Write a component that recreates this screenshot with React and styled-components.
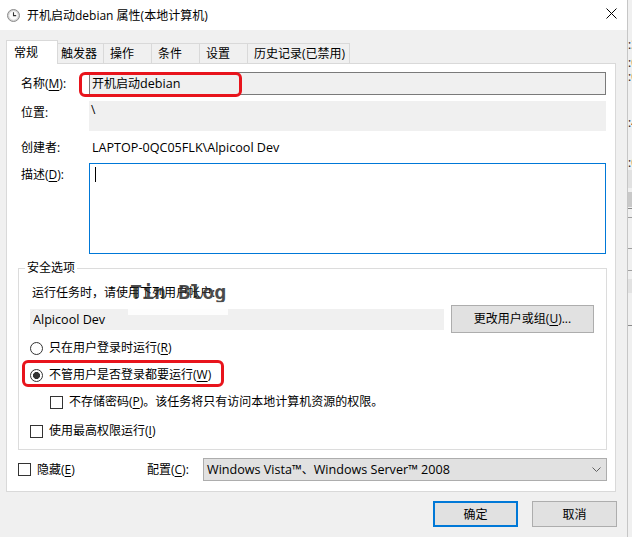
import React from "react";
import styled, { createGlobalStyle } from "styled-components";

const GlobalStyle = createGlobalStyle`
  html, body {
    margin: 0;
    padding: 0;
  }
  body {
    width: 632px;
    height: 537px;
    overflow: hidden;
    background: #f0f0f0;
    font-family: "Open Sans", "Noto Sans CJK SC", sans-serif;
    font-size: 12px;
    color: #000;
  }
  u {
    text-underline-offset: 2px;
  }
`;

const tabs = [
  { label: "常规", w: 52, pad: 7, active: true },
  { label: "触发器", w: 47, pad: 3 },
  { label: "操作", w: 49, pad: 6 },
  { label: "条件", w: 49, pad: 6 },
  { label: "设置", w: 49, pad: 6 },
  { label: "历史记录(已禁用)", w: 103, pad: 6 },
];

const stripBits = [
  { gap: 38, text: ":3" },
  { gap: 4, text: ":0" },
  { gap: 0, text: ":0" },
  { gap: 32, text: ":4" },
  { gap: 26, text: ":0" },
];

export default function App() {
  return (
    <>
      <GlobalStyle />
      <Screen>
        <Dialog>
          <TitleBar>
            <ClockIcon />
            <Title>开机启动debian 属性(本地计算机)</Title>
            <CloseIcon />
          </TitleBar>

          <Body>
            <TabStrip>
              {tabs.map((t) => (
                <Tab key={t.label} $active={t.active} $w={t.w} $pad={t.pad}>
                  {t.label}
                </Tab>
              ))}
            </TabStrip>

            <Panel>
              <FieldRow $mt={8}>
                <Label>
                  名称(<u>M</u>):
                </Label>
                <NameField>
                  开机启动<Latin>debian</Latin>
                </NameField>
              </FieldRow>

              <FieldRow $mt={6}>
                <Label>位置:</Label>
                <LocationField>\</LocationField>
              </FieldRow>

              <FieldRow $mt={9}>
                <Label $flat>创建者:</Label>
                <Value>
                  <Latin>LAPTOP-0QC05FLK\Alpicool Dev</Latin>
                </Value>
              </FieldRow>

              <FieldRow $mt={7}>
                <Label>
                  描述(<u>D</u>):
                </Label>
                <TextArea>
                  <Caret />
                </TextArea>
              </FieldRow>

              <Group>
                <Legend>安全选项</Legend>
                <Intro>运行任务时，请使用下列用户帐户:</Intro>
                <UserRow>
                  <UserField>
                    <Latin>Alpicool Dev</Latin>
                  </UserField>
                  <PushButton>
                    更改用户或组(<u>U</u>)...
                  </PushButton>
                </UserRow>

                <OptionRow $mt={7}>
                  <Radio />
                  <span>
                    只在用户登录时运行(<u>R</u>)
                  </span>
                </OptionRow>
                <OptionRow $mt={11} $marked>
                  <Radio $checked />
                  <span>
                    不管用户是否登录都要运行(<u>W</u>)
                  </span>
                </OptionRow>
                <OptionRow $mt={11} $indent={20}>
                  <Checkbox />
                  <span>
                    不存储密码(<u>P</u>)。该任务将只有访问本地计算机资源的权限。
                  </span>
                </OptionRow>
                <OptionRow $mt={13}>
                  <Checkbox />
                  <span>
                    使用最高权限运行(<u>I</u>)
                  </span>
                </OptionRow>
              </Group>

              <BottomRow>
                <HideOption>
                  <Checkbox />
                  <span>
                    隐藏(<u>E</u>)
                  </span>
                </HideOption>
                <ConfigLabel>
                  配置(<u>C</u>):
                </ConfigLabel>
                <Select>
                  <span>
                    <Latin>Windows Vista™</Latin>、<Latin>Windows Server™ 2008</Latin>
                  </span>
                  <Chevron />
                </Select>
              </BottomRow>
            </Panel>

            <Footer>
              <DialogButton $primary>确定</DialogButton>
              <DialogButton>取消</DialogButton>
            </Footer>
          </Body>

          <Watermark>Tin Blog</Watermark>
          <WatermarkBand />
        </Dialog>

        <BackWindow>
          {stripBits.map((b, i) => (
            <StripText key={i} $gap={b.gap}>
              {b.text}
            </StripText>
          ))}
          <StripBlock $gap={0} $h={18} $c="#e2e2e2" />
          <StripBlock $gap={4} $h={15} $c="#c9c9c9" />
          <StripBlock $gap={1} $h={1} $c="#8a8a8a" />
          <StripBlock $gap={8} $h={1} $c="#a0a0a0" />
          <StripBlock $gap={30} $h={1} $c="#a0a0a0" />
          <StripBlock $gap={21} $h={1} $c="#a0a0a0" />
          <StripBlock $gap={8} $h={14} $c="#e2e2e2" />
          <StripBlock $gap={32} $h={1} $c="#8a8a8a" />
        </BackWindow>
      </Screen>
    </>
  );
}

function ClockIcon() {
  return (
    <svg width="13" height="13" viewBox="0 0 13 13" style={{ flexShrink: 0 }}>
      <circle cx="6.5" cy="6.5" r="6" fill="#d6d6d6" stroke="#8c8c8c" />
      <circle cx="6.5" cy="6.5" r="4.3" fill="#fbfbfb" />
      <path d="M6.5 3.2 V6.6 H9.2" fill="none" stroke="#333" strokeWidth="1.1" />
    </svg>
  );
}

function CloseIcon() {
  return (
    <CloseSvg width="11" height="11" viewBox="0 0 11 11">
      <path d="M0.5 0.5 L10.5 10.5 M10.5 0.5 L0.5 10.5" stroke="#000" strokeWidth="1" />
    </CloseSvg>
  );
}

function Chevron() {
  return (
    <svg width="9" height="5" viewBox="0 0 9 5">
      <path d="M0.5 0.5 L4.5 4.5 L8.5 0.5" fill="none" stroke="#606060" strokeWidth="1" />
    </svg>
  );
}

const Screen = styled.div`
  display: flex;
  width: 632px;
  height: 537px;
`;

const Dialog = styled.div`
  position: relative;
  width: 628px;
  height: 537px;
  flex-shrink: 0;
  box-sizing: border-box;
  border-right: 1px solid #c6c6c6;
  background: #f0f0f0;
`;

const TitleBar = styled.div`
  display: flex;
  align-items: center;
  height: 30px;
  padding-left: 7px;
  background: #fff;
`;

const Title = styled.span`
  margin-left: 7px;
  font-size: 12px;
  color: #000;
  white-space: nowrap;
`;

const CloseSvg = styled.svg`
  margin-left: auto;
  margin-right: 10px;
  margin-top: -3px;
`;

const Latin = styled.span`
  font-size: 12.6px;
`;

const Body = styled.div`
  padding: 10px 10px 0 6px;
`;

const TabStrip = styled.div`
  display: flex;
  align-items: flex-end;
  height: 24px;
  margin-bottom: -1px;
  position: relative;
  z-index: 1;
`;

const Tab = styled.div`
  box-sizing: border-box;
  display: flex;
  align-items: center;
  width: ${(p) => p.$w}px;
  height: ${(p) => (p.$active ? 24 : 21)}px;
  padding-left: ${(p) => p.$pad}px;
  margin-left: ${(p) => (p.$active ? 0 : -1)}px;
  border: 1px solid #d9d9d9;
  border-bottom: ${(p) => (p.$active ? "none" : "1px solid #d9d9d9")};
  background: ${(p) => (p.$active ? "#fff" : "#f0f0f0")};
  position: relative;
  z-index: ${(p) => (p.$active ? 2 : 1)};
  white-space: nowrap;
  line-height: 16px;
`;

const Panel = styled.div`
  box-sizing: border-box;
  width: 610px;
  height: 429px;
  padding: 0 8px 0 11px;
  background: #fff;
  border: 1px solid #d9d9d9;
  display: flex;
  flex-direction: column;
`;

const FieldRow = styled.div`
  display: grid;
  grid-template-columns: 68px 517px;
  align-items: start;
  padding-left: 3px;
  margin-top: ${(p) => p.$mt}px;
  line-height: 16px;
`;

const Label = styled.span`
  padding-top: ${(p) => (p.$flat ? 0 : 4)}px;
  white-space: nowrap;
`;

const NameField = styled.div`
  position: relative;
  box-sizing: border-box;
  height: 23px;
  padding-left: 2px;
  line-height: 21px;
  background: #f0f0f0;
  border: 1px solid #7a7a7a;

  &::after {
    content: "";
    position: absolute;
    left: -11px;
    top: -1px;
    width: 163px;
    height: 25px;
    box-sizing: border-box;
    border: 3px solid #e8141c;
    border-radius: 6px;
  }
`;

const LocationField = styled.div`
  height: 30px;
  padding: 1px 0 0 2px;
  box-sizing: border-box;
  background: #f0f0f0;
`;

const Value = styled.span`
  padding-left: 3px;
  white-space: nowrap;
`;

const TextArea = styled.div`
  box-sizing: border-box;
  height: 91px;
  border: 1px solid #0078d7;
  background: #fff;
`;

const Caret = styled.div`
  width: 1px;
  height: 15px;
  margin: 3px 0 0 5px;
  background: #000;
`;

const Group = styled.fieldset`
  margin: 6px 0 0 0;
  padding: 9px 12px 10px 11px;
  border: 1px solid #dcdcdc;
  min-width: 0;
  line-height: 16px;
`;

const Legend = styled.legend`
  padding: 0 2px;
  margin-left: -5px;
  line-height: 16px;
`;

const Intro = styled.div`
  padding-left: 2px;
  height: 16px;
`;

const UserRow = styled.div`
  display: flex;
  align-items: center;
  gap: 7px;
  height: 28px;
  margin-top: 4px;
`;

const UserField = styled.div`
  box-sizing: border-box;
  width: 414px;
  height: 21px;
  padding-left: 3px;
  line-height: 21px;
  background: #f0f0f0;
`;

const PushButton = styled.div`
  box-sizing: border-box;
  width: 143px;
  height: 28px;
  display: flex;
  align-items: center;
  justify-content: center;
  background: #e1e1e1;
  border: 1px solid #adadad;
  white-space: nowrap;
`;

const OptionRow = styled.div`
  position: relative;
  display: flex;
  align-items: center;
  gap: 6px;
  height: 16px;
  margin-top: ${(p) => p.$mt}px;
  margin-left: ${(p) => p.$indent || 0}px;
  white-space: nowrap;

  ${(p) =>
    p.$marked &&
    `
    &::after {
      content: "";
      position: absolute;
      left: -8px;
      top: -7px;
      width: 202px;
      height: 27px;
      box-sizing: border-box;
      border: 3px solid #e8141c;
      border-radius: 6px;
    }
  `}
`;

const Radio = styled.span`
  box-sizing: border-box;
  width: 13px;
  height: 13px;
  flex-shrink: 0;
  border: 1px solid #333;
  border-radius: 50%;
  background: ${(p) =>
    p.$checked ? "radial-gradient(circle, #333 0 3.2px, #fff 3.8px)" : "#fff"};
`;

const Checkbox = styled.span`
  box-sizing: border-box;
  width: 13px;
  height: 13px;
  flex-shrink: 0;
  border: 1px solid #333;
  background: #fff;
`;

const BottomRow = styled.div`
  display: flex;
  align-items: center;
  height: 23px;
  margin-top: 8px;
  line-height: 16px;
`;

const HideOption = styled.div`
  display: flex;
  align-items: center;
  gap: 6px;
  width: 129px;
`;

const ConfigLabel = styled.span`
  width: 56px;
  white-space: nowrap;
`;

const Select = styled.div`
  box-sizing: border-box;
  width: 404px;
  height: 23px;
  display: flex;
  align-items: center;
  justify-content: space-between;
  padding: 0 5px 0 3px;
  background: #e1e1e1;
  border: 1px solid #adadad;
  white-space: nowrap;
`;

const Footer = styled.div`
  display: flex;
  justify-content: flex-end;
  gap: 14px;
  margin-top: 9px;
`;

const DialogButton = styled.div`
  box-sizing: border-box;
  width: 85px;
  height: 26px;
  display: flex;
  align-items: center;
  justify-content: center;
  background: #e1e1e1;
  border: ${(p) => (p.$primary ? "2px solid #0078d7" : "1px solid #adadad")};
`;

const Watermark = styled.span`
  position: absolute;
  left: 130px;
  top: 280px;
  font-family: "DejaVu Sans Mono", monospace;
  font-weight: bold;
  font-size: 20px;
  line-height: 24px;
  color: rgba(35, 35, 35, 0.82);
  pointer-events: none;
`;

const WatermarkBand = styled.span`
  position: absolute;
  left: 128px;
  top: 302px;
  width: 100px;
  height: 13px;
  background: rgba(255, 255, 255, 0.85);
  pointer-events: none;
`;

const BackWindow = styled.div`
  flex: 1;
  overflow: hidden;
  background: #f0f0f0;
  display: flex;
  flex-direction: column;
`;

const StripText = styled.span`
  margin-top: ${(p) => p.$gap}px;
  font-size: 12px;
  line-height: 14px;
  white-space: nowrap;
  color: #1a1a1a;
`;

const StripBlock = styled.span`
  flex-shrink: 0;
  margin-top: ${(p) => p.$gap}px;
  height: ${(p) => p.$h}px;
  background: ${(p) => p.$c};
`;
